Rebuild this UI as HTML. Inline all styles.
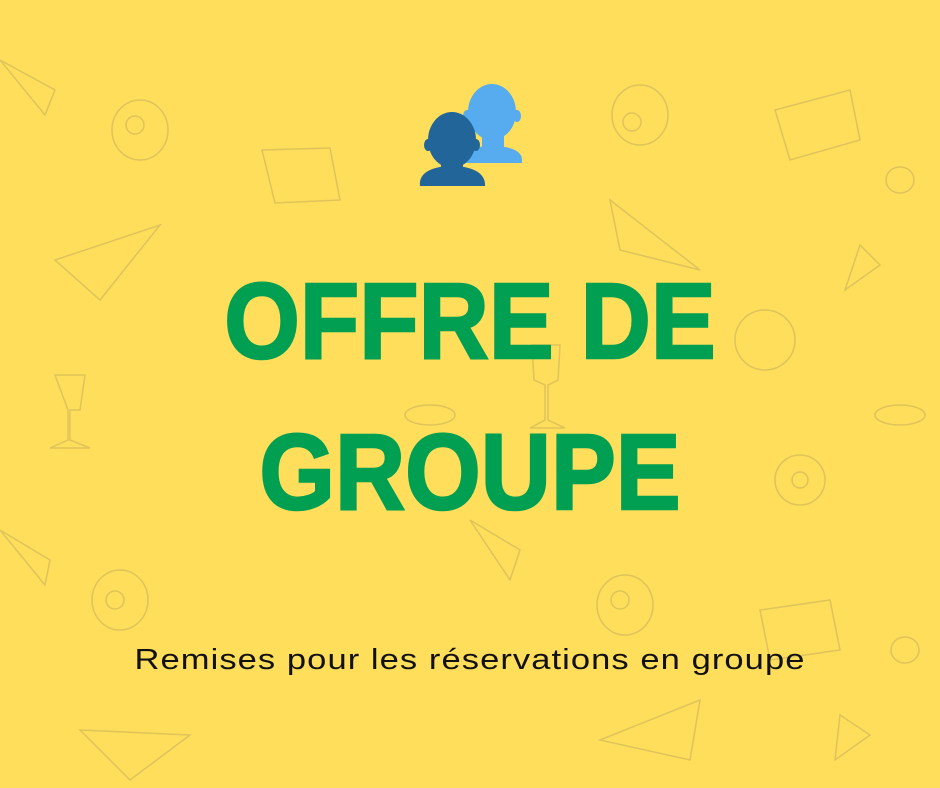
<!DOCTYPE html>
<html><head><meta charset="utf-8"><style>
html,body{margin:0;padding:0}
body{width:940px;height:788px;background:#fede5b;position:relative;overflow:hidden;font-family:"Liberation Sans",sans-serif}
.t{position:absolute;left:0;width:940px;text-align:center;color:#009f51;font-weight:bold;font-size:108px;line-height:1;transform:scaleX(0.9);transform-origin:470px 0;-webkit-text-stroke:2.5px #009f51}
.s{position:absolute;left:0;width:940px;text-align:center;top:644px;font-size:29px;color:#111;letter-spacing:0.9px;transform:scaleX(1.19);transform-origin:470px 0}
</style></head><body>
<svg width="940" height="788" style="position:absolute;left:0;top:0" fill="none" stroke="#d9bd5a" stroke-width="1.5" opacity="0.8">
<ellipse cx="140" cy="130" rx="28" ry="30"/><circle cx="135" cy="125" r="9"/>
<ellipse cx="640" cy="115" rx="28" ry="30"/><circle cx="632" cy="122" r="9"/>
<ellipse cx="120" cy="600" rx="28" ry="30"/><circle cx="115" cy="600" r="9"/>
<ellipse cx="625" cy="605" rx="28" ry="30"/><circle cx="620" cy="600" r="9"/>
<path d="M262 150 L330 148 L340 200 L275 203 Z"/><path d="M775 110 L850 90 L860 140 L790 160 Z"/>
<path d="M760 610 L830 600 L840 650 L770 660 Z"/><path d="M55 260 L160 225 L100 300 Z"/>
<path d="M610 200 L700 270 L620 250 Z"/><path d="M80 730 L190 735 L130 780 Z"/><path d="M600 740 L700 700 L690 760 Z"/>
<circle cx="765" cy="340" r="30"/><circle cx="800" cy="480" r="25"/><circle cx="800" cy="480" r="8"/>
<path d="M55 375 L85 375 L80 410 L70 410 L70 440 L90 448 L50 448 L68 440 L68 410 Z"/>
<path d="M532 345 L560 345 L558 380 L548 385 L548 420 L565 428 L530 428 L545 420 L545 385 L534 380 Z"/>
<path d="M0 60 L55 90 L45 115 Z"/><path d="M0 530 L50 560 L45 585 Z"/><path d="M470 520 L520 550 L510 580 Z"/>
<path d="M860 245 L880 265 L845 290 Z"/><path d="M840 715 L870 735 L835 760 Z"/>
<ellipse cx="900" cy="415" rx="25" ry="10"/><ellipse cx="430" cy="415" rx="25" ry="10"/>
<ellipse cx="900" cy="180" rx="14" ry="13"/><ellipse cx="905" cy="650" rx="14" ry="13"/>
</svg>
<svg width="940" height="788" style="position:absolute;left:0;top:0">
<g fill="#56acee">
<ellipse cx="492" cy="112" rx="24" ry="28"/>
<ellipse cx="467" cy="116" rx="4" ry="6"/><ellipse cx="517" cy="116" rx="4" ry="6"/>
<rect x="482" y="130" width="22" height="22"/>
<path d="M462 163 C462 150 476 146 492 146 C508 146 522 150 522 160 L522 163 Z"/>
</g>
<g fill="#226699">
<ellipse cx="452" cy="140" rx="24" ry="28"/>
<ellipse cx="428" cy="145" rx="4" ry="6"/><ellipse cx="476" cy="145" rx="4" ry="6"/>
<rect x="441" y="158" width="22" height="22"/>
<path d="M420 186 C418 172 434 166 452 166 C470 166 486 172 485 186 Z"/>
</g>
</svg>
<div class="t" style="top:267px">OFFRE DE</div>
<div class="t" style="top:418px">GROUPE</div>
<div class="s">Remises pour les réservations en groupe</div>
</body></html>
